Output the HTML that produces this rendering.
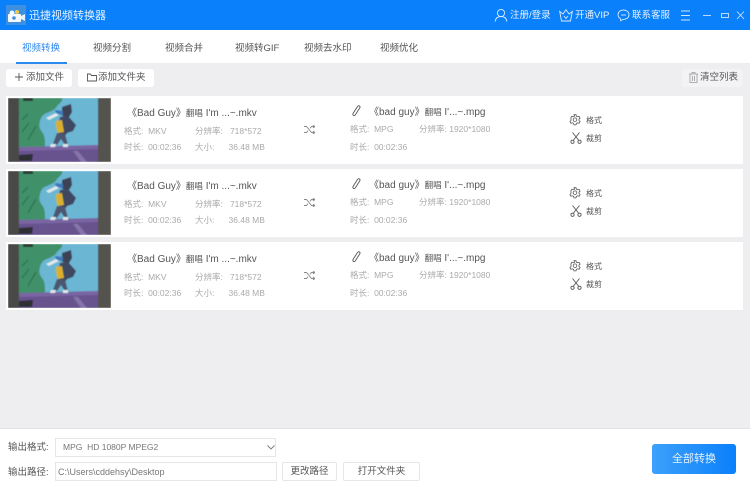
<!DOCTYPE html>
<html><head><meta charset="utf-8">
<style>
*{box-sizing:border-box;margin:0;padding:0}
html,body{width:750px;height:491px;overflow:hidden;background:#eeeef0}
body{position:relative;font-family:"Liberation Sans","Noto Sans CJK SC",sans-serif;color:#555;filter:blur(.3px)}
.a{position:absolute;white-space:nowrap}
svg{position:absolute;display:block}
.tab{position:absolute;top:42px;font-size:9.5px;line-height:14px;color:#555;white-space:nowrap}
.btn{position:absolute;background:#fff;border-radius:3px;font-size:9.5px;line-height:19px;color:#555;white-space:nowrap}
.row{position:absolute;left:6px;width:737px;height:68px;background:#fff}
.t{position:absolute;font-size:10px;line-height:14px;color:#555;white-space:nowrap}
.t span{font-size:8.5px}
.m{position:absolute;font-size:8.5px;line-height:12px;color:#aaa;white-space:nowrap}
.o{position:absolute;font-size:8px;line-height:12px;color:#555;white-space:nowrap}
.top{position:absolute;top:9px;font-size:9.5px;line-height:14px;color:#e8f2ff;white-space:nowrap}
</style></head><body>
<div class="a" style="left:0;top:0;width:750px;height:30px;background:#0a80fb"></div>
<svg style="left:6px;top:5px" width="20" height="20" viewBox="0 0 20 20"><rect width="20" height="20" fill="#3d8fe0"/><rect x="2" y="9" width="13" height="8" rx="1" fill="#f4f8fc"/><path d="M15 11l4-2v7l-4-2z" fill="#e8f0f8"/><circle cx="6" cy="8" r="2.500" fill="#f4f8fc"/><circle cx="11" cy="7" r="2" fill="#f2c94c"/><circle cx="8" cy="13" r="1.800" fill="#3d8fe0"/></svg>
<div class="a" style="left:29px;top:8px;font-size:11px;line-height:16px;color:#e9f3ff">迅捷视频转换器</div>

<svg style="left:494px;top:8px" width="14" height="14" viewBox="0 0 14 14" fill="none" stroke="#dcecff" stroke-width=".9"><circle cx="7" cy="5" r="3.600"/><path d="M1 13.500c.6-3.200 2.600-5 6-5s5.400 1.800 6 5"/></svg>
<div class="top" style="left:510px">注册/登录</div>
<svg style="left:559px;top:9px" width="14" height="13" viewBox="0 0 14 13" fill="none" stroke="#dcecff" stroke-width=".9"><path d="M.700 2.500l3.300 2.500L7 .700l3 4.300 3.300-2.500-1.800 9.500h-9z"/><path d="M5 7l2 2.500L9 7"/></svg>
<div class="top" style="left:575px">开通VIP</div>
<svg style="left:617px;top:9px" width="13" height="13" viewBox="0 0 13 13" fill="none" stroke="#dcecff" stroke-width=".9"><path d="M6.500 1C3.400 1 1 3 1 5.700c0 1.700 1 3.100 2.500 4l.3 2 2-1.300h.7c3.100 0 5.500-2 5.500-4.700S9.600 1 6.500 1z"/><path d="M4 6h5"/></svg>
<div class="top" style="left:632px">联系客服</div>
<svg style="left:680px;top:10px" width="65" height="11" viewBox="0 0 65 11" fill="none" stroke="#cfe4fd" stroke-width=".9"><path d="M1 1h9M1 5.500h9M1 10h9"/><path d="M23 5.500h8"/><rect x="41.500" y="3.500" width="7" height="4"/><path d="M57 1.500l7 7.500M64 1.500L57 9"/></svg>

<div class="a" style="left:0;top:30px;width:750px;height:33px;background:#fff"></div>
<div class="tab" style="left:22px;color:#2c8af0">视频转换</div>
<div class="a" style="left:16px;top:62px;width:51px;height:2px;background:#2c8af0"></div>
<div class="tab" style="left:93px">视频分割</div>
<div class="tab" style="left:165px">视频合并</div>
<div class="tab" style="left:235px">视频转GIF</div>
<div class="tab" style="left:304px">视频去水印</div>
<div class="tab" style="left:380px">视频优化</div>

<div class="btn" style="left:6px;top:69px;width:66px;height:18px;padding-left:20px;line-height:18px">添加文件</div>
<svg style="left:15px;top:73px" width="8" height="8" viewBox="0 0 8 8" stroke="#555" stroke-width=".9"><path d="M4 0v8M0 4h8"/></svg>
<div class="btn" style="left:78px;top:69px;width:76px;height:18px;padding-left:20px;line-height:18px">添加文件夹</div>
<svg style="left:87px;top:73px" width="10" height="9" viewBox="0 0 10 9" fill="none" stroke="#555" stroke-width=".9"><path d="M.500 8V1h3l1 1.500h5V8z"/></svg>
<div class="btn" style="left:682px;top:69px;width:61px;height:18px;padding-left:18px;line-height:18px;background:#f3f3f5">清空列表</div>
<svg style="left:689px;top:72px" width="9" height="11" viewBox="0 0 9 11" fill="none" stroke="#999" stroke-width=".8"><path d="M0 2h9M3 2V.500h3V2M1 2v8.500h7V2M3.500 4v5M5.500 4v5"/></svg>

<svg width="0" height="0" style="left:0;top:0"><defs>
<filter id="bl"><feGaussianBlur stdDeviation=".6"/></filter>
<g id="th" filter="url(#bl)">
<rect width="103" height="64" fill="#4a4946"/>
<rect x="11" width="79" height="64" fill="#6bb6d3"/>
<rect x="90" width="13" height="64" fill="#55524e"/>
<path d="M11 0h43c1 3-2 5-5 8-2 4-6 5-10 7-4 1-6 4-7 8-1 5-1 7 2 11 3 4 3 8 3 15H11z" fill="#41916b"/>
<path d="M14 34l7-9M20 42l8-14M14 22l6-6" stroke="#2f7355" stroke-width="1.300"/>
<rect x="15" y="0" width="10" height="3" fill="#2a3a30"/>
<rect x="11" y="49" width="79" height="15" fill="#67528f"/>
<path d="M11 49l79-2v4l-79 2z" fill="#7a65a3"/>
<path d="M70 53l9 11h-6l-8-11z" fill="#8574a9"/>
<path d="M11 57l14-1-1 7H11z" fill="#2f2e36"/>
<path d="M54 9l9-3 1 8-3 5-7-1z" fill="#3c4256"/>
<path d="M47 12l8 1 0 4-7-1z" fill="#3c78b8"/>
<path d="M38 20l10-5 3 2-10 5z" fill="#dfe9ec"/>
<path d="M52 19l8-1 8 9-3 6-6 2-2 3h-6l-1-10z" fill="#3f4760"/>
<path d="M48 23l6-1 2 12-6 1-2-6z" fill="#d9b02e"/>
<path d="M49 35l8 1 3 11h-3l-4-6-4 6-4-1z" fill="#4d5670"/>
<path d="M43 46l5 0-1 3-5 0zM55 46h5l0 3h-5z" fill="#dfe6ea"/>
</g>
<g id="gear" fill="none" stroke="#555" stroke-width=".8"><path d="M5.500.700h2l.4 1.500 1.200.6 1.500-.5 1 1.700-1.100 1.100v1.400l1.100 1.100-1 1.700-1.500-.5-1.200.6-.4 1.500h-2l-.4-1.500-1.200-.6-1.500.5-1-1.700 1.100-1.100V5L2.400 3.900l1-1.700 1.500.5 1.200-.6z" transform="translate(-.5)"/><circle cx="6" cy="5.700" r="1.800"/></g>
<g id="cut" fill="none" stroke="#555" stroke-width=".9"><path d="M2.500.500l6 7.500M9.500.500l-6 7.500"/><circle cx="2.500" cy="9.800" r="1.600"/><circle cx="9.500" cy="9.800" r="1.600"/></g>
<g id="shuf" fill="none" stroke="#888" stroke-width=".9"><path d="M0 1.500h2.500l5 6H11M0 7.500h2.500l1.500-1.800M6 3.300l1.500-1.800H11M9 0l2 1.500L9 3M9 6l2 1.500L9 9"/></g>
<g id="pen" fill="none" stroke="#555" stroke-width=".9"><path d="M1.500 10.500c-.8-.6-.8-1.400-.4-2.100L5.500 1.500c.5-.8 1.400-1 2-.5s.7 1.300.2 2L3.300 9.900c-.5.700-1.200 1-1.800.6z"/></g>
</defs></svg>

<div class="row" style="top:96px"></div>
<svg style="left:8px;top:98px" width="103" height="64"><use href="#th"/></svg>
<div class="t" style="left:127px;top:106px">《Bad Guy》<span>翻唱</span> I'm ...~.mkv</div>
<div class="m" style="left:124px;top:125px">格式:&nbsp; MKV</div>
<div class="m" style="left:195px;top:125px">分辨率:&nbsp;&nbsp; 718*572</div>
<div class="m" style="left:124px;top:141px">时长:&nbsp; 00:02:36</div>
<div class="m" style="left:195px;top:141px">大小:&nbsp;&nbsp;&nbsp;&nbsp;&nbsp; 36.48 MB</div>
<svg style="left:304px;top:125px" width="11" height="9"><use href="#shuf"/></svg>
<svg style="left:352px;top:105px" width="9" height="12"><use href="#pen"/></svg>
<div class="t" style="left:369px;top:105px">《bad guy》<span>翻唱</span> I'...~.mpg</div>
<div class="m" style="left:350px;top:123px">格式:&nbsp; MPG</div>
<div class="m" style="left:419px;top:123px">分辨率: 1920*1080</div>
<div class="m" style="left:350px;top:141px">时长:&nbsp; 00:02:36</div>
<svg style="left:569px;top:114px" width="13" height="12"><use href="#gear"/></svg>
<div class="o" style="left:586px;top:115px">格式</div>
<svg style="left:570px;top:132px" width="12" height="12"><use href="#cut"/></svg>
<div class="o" style="left:586px;top:133px">裁剪</div>

<div class="row" style="top:169px"></div>
<svg style="left:8px;top:171px" width="103" height="64"><use href="#th"/></svg>
<div class="t" style="left:127px;top:179px">《Bad Guy》<span>翻唱</span> I'm ...~.mkv</div>
<div class="m" style="left:124px;top:198px">格式:&nbsp; MKV</div>
<div class="m" style="left:195px;top:198px">分辨率:&nbsp;&nbsp; 718*572</div>
<div class="m" style="left:124px;top:214px">时长:&nbsp; 00:02:36</div>
<div class="m" style="left:195px;top:214px">大小:&nbsp;&nbsp;&nbsp;&nbsp;&nbsp; 36.48 MB</div>
<svg style="left:304px;top:198px" width="11" height="9"><use href="#shuf"/></svg>
<svg style="left:352px;top:178px" width="9" height="12"><use href="#pen"/></svg>
<div class="t" style="left:369px;top:178px">《bad guy》<span>翻唱</span> I'...~.mpg</div>
<div class="m" style="left:350px;top:196px">格式:&nbsp; MPG</div>
<div class="m" style="left:419px;top:196px">分辨率: 1920*1080</div>
<div class="m" style="left:350px;top:214px">时长:&nbsp; 00:02:36</div>
<svg style="left:569px;top:187px" width="13" height="12"><use href="#gear"/></svg>
<div class="o" style="left:586px;top:188px">格式</div>
<svg style="left:570px;top:205px" width="12" height="12"><use href="#cut"/></svg>
<div class="o" style="left:586px;top:206px">裁剪</div>

<div class="row" style="top:242px"></div>
<svg style="left:8px;top:244px" width="103" height="64"><use href="#th"/></svg>
<div class="t" style="left:127px;top:252px">《Bad Guy》<span>翻唱</span> I'm ...~.mkv</div>
<div class="m" style="left:124px;top:271px">格式:&nbsp; MKV</div>
<div class="m" style="left:195px;top:271px">分辨率:&nbsp;&nbsp; 718*572</div>
<div class="m" style="left:124px;top:287px">时长:&nbsp; 00:02:36</div>
<div class="m" style="left:195px;top:287px">大小:&nbsp;&nbsp;&nbsp;&nbsp;&nbsp; 36.48 MB</div>
<svg style="left:304px;top:271px" width="11" height="9"><use href="#shuf"/></svg>
<svg style="left:352px;top:251px" width="9" height="12"><use href="#pen"/></svg>
<div class="t" style="left:369px;top:251px">《bad guy》<span>翻唱</span> I'...~.mpg</div>
<div class="m" style="left:350px;top:269px">格式:&nbsp; MPG</div>
<div class="m" style="left:419px;top:269px">分辨率: 1920*1080</div>
<div class="m" style="left:350px;top:287px">时长:&nbsp; 00:02:36</div>
<svg style="left:569px;top:260px" width="13" height="12"><use href="#gear"/></svg>
<div class="o" style="left:586px;top:261px">格式</div>
<svg style="left:570px;top:278px" width="12" height="12"><use href="#cut"/></svg>
<div class="o" style="left:586px;top:279px">裁剪</div>

<div class="a" style="left:0;top:428px;width:750px;height:63px;background:#fff;border-top:1px solid #e2e2e4"></div>
<div class="a" style="left:8px;top:441px;font-size:9.5px;line-height:14px;color:#555">输出格式:</div>
<div class="a" style="left:55px;top:438px;width:221px;height:19px;border:1px solid #e6e6e6;font-size:8.500px;line-height:17px;padding-left:7px;color:#777">MPG&nbsp; HD 1080P MPEG2</div>
<svg style="left:267px;top:445px" width="8" height="5" viewBox="0 0 8 5" fill="none" stroke="#777" stroke-width=".9"><path d="M.500.500L4 4 7.500.500"/></svg>
<div class="a" style="left:8px;top:466px;font-size:9.5px;line-height:14px;color:#555">输出路径:</div>
<div class="a" style="left:55px;top:462px;width:222px;height:19px;border:1px solid #e6e6e6;font-size:9px;line-height:19px;padding-left:2px;color:#777">C:\Users\cddehsy\Desktop</div>
<div class="a" style="left:282px;top:462px;width:55px;height:19px;border:1px solid #e6e6e6;border-radius:2px;font-size:9.5px;line-height:18px;text-align:center;color:#555">更改路径</div>
<div class="a" style="left:343px;top:462px;width:77px;height:19px;border:1px solid #e6e6e6;border-radius:2px;font-size:9.5px;line-height:18px;text-align:center;color:#555">打开文件夹</div>
<div class="a" style="left:652px;top:444px;width:84px;height:30px;border-radius:3px;background:linear-gradient(90deg,#3da0fb,#0a80fb);font-size:11px;line-height:30px;text-align:center;color:#e6f2ff">全部转换</div>
</body></html>
